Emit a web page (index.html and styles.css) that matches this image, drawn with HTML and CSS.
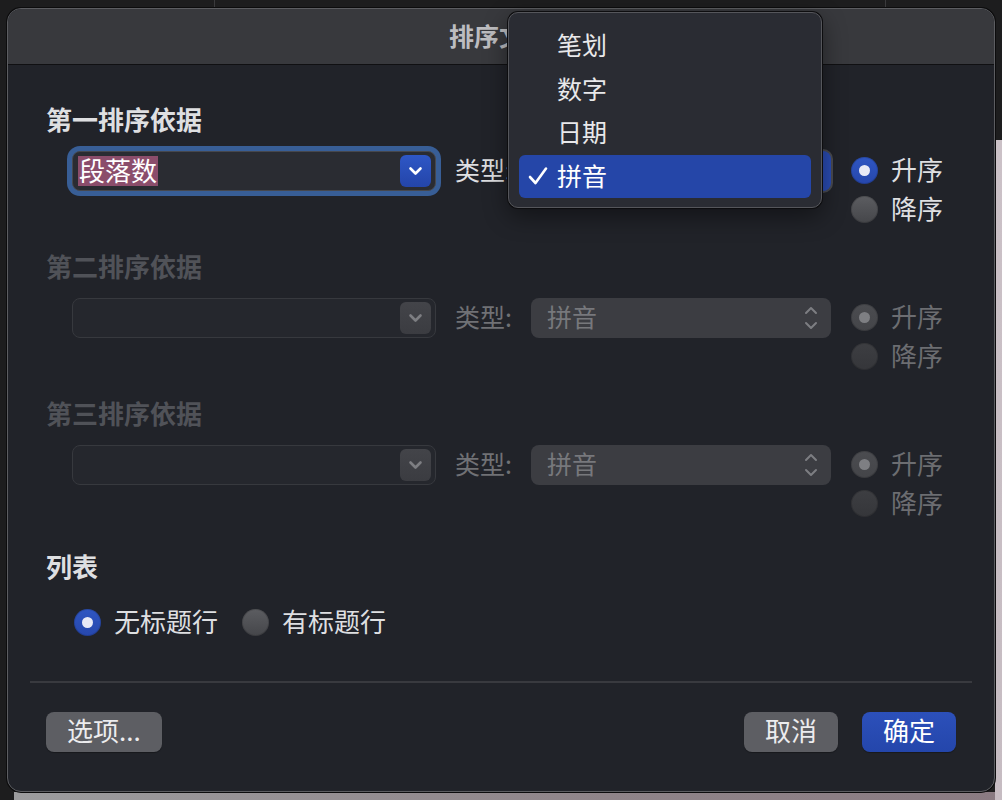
FILE: index.html
```html
<!DOCTYPE html>
<html lang="zh-CN">
<head>
<meta charset="utf-8">
<title>排序文字</title>
<link rel="stylesheet" href="styles.css">
</head>
<body>
<div class="desktop">
  <div class="dialog">
    <div class="titlebar"><span class="title">排序文字</span></div>
    <div class="content">
      <section class="sort">
        <h2 class="heading">第一排序依据</h2>
        <div class="sort-row">
          <div class="field focused">
            <span class="sel">段落数</span>
            <span class="field-btn active">
              <svg width="31" height="32" viewBox="0 0 31 32"><polyline points="10.5,13.5 15.5,18.5 20.5,13.5" fill="none" stroke="#ffffff" stroke-width="2.6" stroke-linecap="round" stroke-linejoin="round"/></svg>
            </span>
          </div>
          <span class="type-label">类型:</span>
          <div class="popup open">
            <svg class="updown" width="14" height="26" viewBox="0 0 14 26"><polyline points="2,8 7,3 12,8" fill="none" stroke="#ffffff" stroke-width="2" stroke-linecap="round" stroke-linejoin="round"/><polyline points="2,18 7,23 12,18" fill="none" stroke="#ffffff" stroke-width="2" stroke-linecap="round" stroke-linejoin="round"/></svg>
          </div>
          <div class="order">
            <div class="radio-item"><span class="radio on"></span><span class="lbl">升序</span></div>
            <div class="radio-item"><span class="radio"></span><span class="lbl">降序</span></div>
          </div>
        </div>
      </section>

      <section class="sort disabled">
        <h2 class="heading">第二排序依据</h2>
        <div class="sort-row">
          <div class="field">
            <span class="field-btn">
              <svg width="31" height="32" viewBox="0 0 31 32"><polyline points="10.5,13.5 15.5,18.5 20.5,13.5" fill="none" stroke="#7d7e82" stroke-width="2.6" stroke-linecap="round" stroke-linejoin="round"/></svg>
            </span>
          </div>
          <span class="type-label">类型:</span>
          <div class="popup">
            <span class="lbl">拼音</span>
            <svg class="updown" width="14" height="26" viewBox="0 0 14 26"><polyline points="2,8 7,3 12,8" fill="none" stroke="#7d7e82" stroke-width="2" stroke-linecap="round" stroke-linejoin="round"/><polyline points="2,18 7,23 12,18" fill="none" stroke="#7d7e82" stroke-width="2" stroke-linecap="round" stroke-linejoin="round"/></svg>
          </div>
          <div class="order">
            <div class="radio-item"><span class="radio on"></span><span class="lbl">升序</span></div>
            <div class="radio-item"><span class="radio"></span><span class="lbl">降序</span></div>
          </div>
        </div>
      </section>

      <section class="sort disabled">
        <h2 class="heading">第三排序依据</h2>
        <div class="sort-row">
          <div class="field">
            <span class="field-btn">
              <svg width="31" height="32" viewBox="0 0 31 32"><polyline points="10.5,13.5 15.5,18.5 20.5,13.5" fill="none" stroke="#7d7e82" stroke-width="2.6" stroke-linecap="round" stroke-linejoin="round"/></svg>
            </span>
          </div>
          <span class="type-label">类型:</span>
          <div class="popup">
            <span class="lbl">拼音</span>
            <svg class="updown" width="14" height="26" viewBox="0 0 14 26"><polyline points="2,8 7,3 12,8" fill="none" stroke="#7d7e82" stroke-width="2" stroke-linecap="round" stroke-linejoin="round"/><polyline points="2,18 7,23 12,18" fill="none" stroke="#7d7e82" stroke-width="2" stroke-linecap="round" stroke-linejoin="round"/></svg>
          </div>
          <div class="order">
            <div class="radio-item"><span class="radio on"></span><span class="lbl">升序</span></div>
            <div class="radio-item"><span class="radio"></span><span class="lbl">降序</span></div>
          </div>
        </div>
      </section>

      <section class="list">
        <h2 class="heading">列表</h2>
        <div class="list-row">
          <div class="radio-item"><span class="radio on"></span><span class="lbl">无标题行</span></div>
          <div class="radio-item"><span class="radio"></span><span class="lbl">有标题行</span></div>
        </div>
      </section>

      <div class="separator"></div>

      <div class="footer">
        <button class="btn">选项...</button>
        <span class="spacer"></span>
        <button class="btn">取消</button>
        <button class="btn primary">确定</button>
      </div>
    </div>

    <div class="menu">
      <div class="menu-item">笔划</div>
      <div class="menu-item">数字</div>
      <div class="menu-item">日期</div>
      <div class="menu-item current">
        <svg class="check" width="22" height="22" viewBox="0 0 22 22"><polyline points="3,12 8.5,18 19,3.5" fill="none" stroke="#ffffff" stroke-width="2.6" stroke-linecap="round" stroke-linejoin="round"/></svg>
        拼音
      </div>
    </div>
  </div>
</div>
</body>
</html>
```

FILE: styles.css
```css
* { box-sizing: border-box; }

html, body {
  margin: 0;
  padding: 0;
}

body {
  width: 1002px;
  height: 800px;
  overflow: hidden;
  font-family: "Noto Sans CJK SC", "Noto Sans", sans-serif;
  background-color: #1d1d1e;
  background-image:
    linear-gradient(#3a3a3c, #3a3a3c),
    linear-gradient(#3a3a3c, #3a3a3c),
    linear-gradient(#cbc1c7, #c6bcc2),
    linear-gradient(90deg, #9c9c9e, #8f8489 60%, #8a7b82);
  background-size: 1px 8px, 1px 8px, 7px 660px, 988px 8px;
  background-position: 214px 0, 885px 0, 995px 140px, 14px 792px;
  background-repeat: no-repeat;
}

.desktop {
  padding: 8px 7px;
}

.dialog {
  position: relative;
  width: 988px;
  height: 784px;
  border: 1px solid #5c5d61;
  border-radius: 14px;
  background: #212329;
  box-shadow: 0 0 0 1px #0c0c0d;
  display: flex;
  flex-direction: column;
  color: #dedfe1;
}

.titlebar {
  height: 56px;
  flex: none;
  background: #38393d;
  border-bottom: 1px solid #101012;
  border-radius: 13px 13px 0 0;
  display: flex;
  align-items: center;
  justify-content: center;
  padding: 0 4px 4px 0;
}

.title {
  font-size: 25px;
  font-weight: 700;
  color: #bdbdc0;
  line-height: 30px;
}

.content {
  flex: 1;
  padding: 41px 38px 0 38px;
  display: flex;
  flex-direction: column;
}

.heading {
  margin: 0;
  font-size: 26px;
  line-height: 26px;
  height: 30px;
  font-weight: 700;
  color: #dedfe1;
}

.sort {
  margin-bottom: 24px;
}

.sort .heading {
  margin-bottom: 15px;
}

.sort-row {
  display: flex;
  align-items: flex-start;
  height: 78px;
}

.field {
  margin-left: 26px;
  width: 364px;
  height: 40px;
  border: 1px solid #46484e;
  border-radius: 8px;
  background: #2a2c32;
  display: flex;
  align-items: center;
  padding: 0 4px 0 5px;
}

.field.focused {
  box-shadow: 0 0 0 5px #385e96;
}

.sel {
  font-size: 26px;
  line-height: 26px;
  height: 30px;
  padding: 1px 1px 3px 1px;
  background: #8b4d6b;
  color: #ffffff;
}

.field-btn {
  margin-left: auto;
  width: 31px;
  height: 32px;
  border-radius: 6px;
  background: linear-gradient(#434449, #3b3c41);
  display: flex;
}

.field-btn.active {
  background: linear-gradient(#2e57c6, #2445a9);
}

.type-label {
  display: block;
  margin-left: 19px;
  width: 76px;
  height: 40px;
  font-size: 25px;
  line-height: 36px;
  color: #dedfe1;
}

.popup {
  width: 300px;
  height: 40px;
  border-radius: 8px;
  background: #3c3d42;
  display: flex;
  align-items: center;
  padding: 0 13px 0 16px;
  font-size: 25px;
  color: #dedfe1;
}

.popup.open {
  background: #2a4cb3;
  box-shadow: 0 0 0 2px #4a4b50;
}

.lbl {
  padding-bottom: 4px;
}

.updown {
  margin-left: auto;
}

.order {
  margin-left: 20px;
  display: flex;
  flex-direction: column;
}

.radio-item {
  display: flex;
  align-items: center;
  height: 39px;
  font-size: 26px;
  color: #dedfe1;
}

.radio {
  width: 27px;
  height: 27px;
  border-radius: 50%;
  margin-right: 13px;
  background: linear-gradient(#5c5d61, #45464a);
  box-shadow: inset 0 0 0 1px rgba(0,0,0,0.15);
  display: flex;
  align-items: center;
  justify-content: center;
  flex: none;
}

.radio.on {
  background: linear-gradient(#2f56c2, #2647ac);
}

.radio.on::after {
  content: "";
  width: 11px;
  height: 11px;
  border-radius: 50%;
  background: #e8eaf6;
}

/* disabled sections */
.disabled .heading { color: #505258; }
.disabled .type-label { color: #707175; }
.disabled .field {
  background: #25272d;
  border-color: #37393e;
}
.disabled .popup { color: #77787c; }
.disabled .radio-item { color: #6c6d71; }
.disabled .radio {
  background: linear-gradient(#3d3e42, #35363a);
}
.disabled .radio.on {
  background: linear-gradient(#4b4c50, #444549);
}
.disabled .radio.on::after {
  background: #7e7f83;
}

.list {
  margin-top: 6px;
}

.list .heading {
  margin-bottom: 24px;
}

.list-row {
  display: flex;
  align-items: center;
  padding-left: 28px;
  height: 30px;
}

.list-row .radio-item {
  height: 30px;
  margin-right: 24px;
}

.separator {
  margin: 44px -16px 0 -16px;
  height: 2px;
  background: #393a3f;
}

.footer {
  margin-top: 29px;
  display: flex;
  align-items: center;
  gap: 24px;
}

.spacer { flex: 1; }

.btn {
  height: 40px;
  min-width: 94px;
  padding: 0 21px 4px 21px;
  border: none;
  border-radius: 8px;
  background: #5d5e63;
  color: #ececee;
  font-family: "Noto Sans CJK SC", "Noto Sans", sans-serif;
  font-size: 26px;
  line-height: 36px;
  box-shadow: 0 1px 1px rgba(0,0,0,0.3);
}

.btn.primary {
  background: linear-gradient(#2c50ba, #2446ab);
  color: #ffffff;
}

/* open popup menu */
.menu {
  position: absolute;
  left: 500px;
  top: 3px;
  width: 314px;
  height: 196px;
  padding: 11px 10px 9px 10px;
  border-radius: 10px;
  background: #2a2c33;
  border: 1px solid #55565b;
  box-shadow: 0 0 0 1px #0d0d0f, 0 8px 24px rgba(0,0,0,0.45);
  display: flex;
  flex-direction: column;
}

.menu-item {
  height: 44px;
  display: flex;
  align-items: center;
  padding-left: 38px;
  padding-bottom: 4px;
  font-size: 25px;
  color: #e8e8ea;
  position: relative;
}

.menu-item.current {
  height: 43px;
  background: #2546a8;
  border-radius: 6px;
  color: #ffffff;
}

.check {
  position: absolute;
  left: 8px;
  top: 10px;
}
```
